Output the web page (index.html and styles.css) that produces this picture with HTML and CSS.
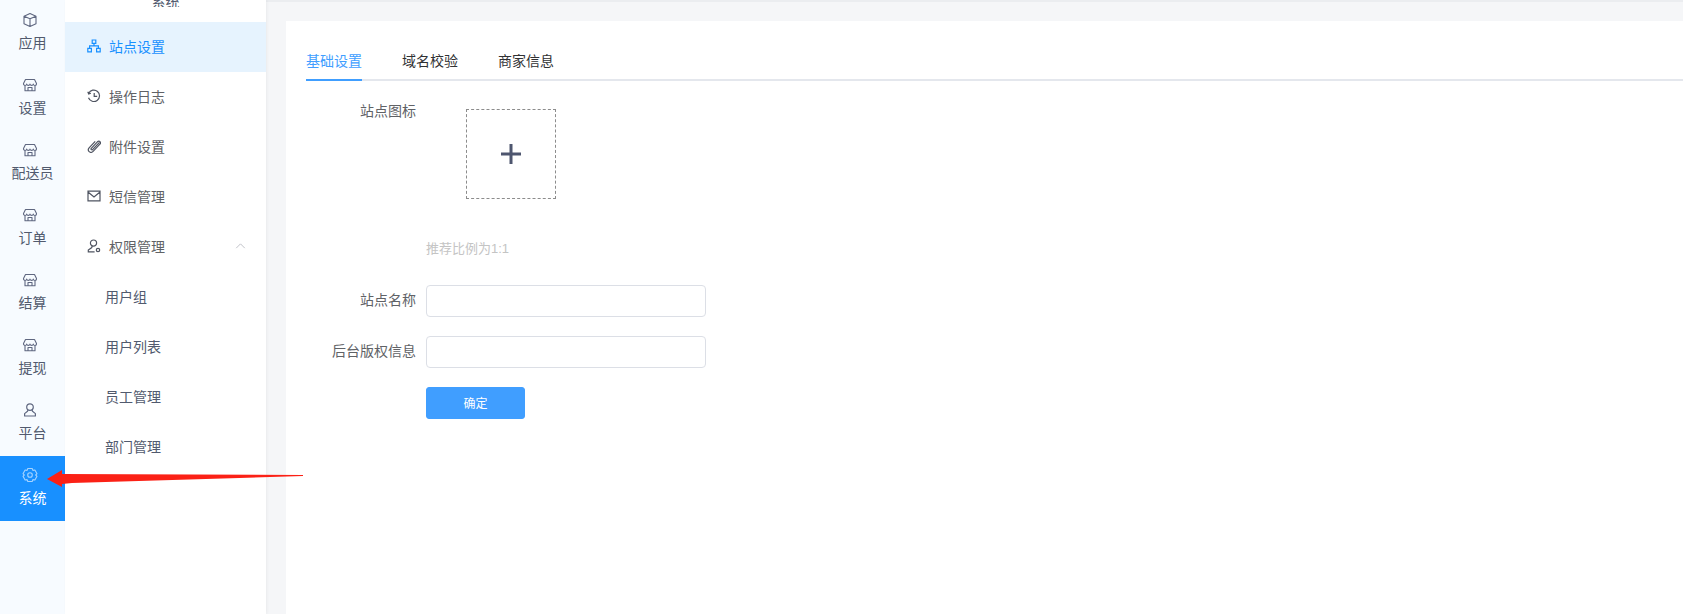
FILE: index.html
```html
<!DOCTYPE html>
<html lang="zh-CN">
<head>
<meta charset="utf-8">
<title>站点设置</title>
<link rel="stylesheet" href="styles.css">
</head>
<body>
<svg class="defs" width="0" height="0" aria-hidden="true">
  <symbol id="i-store" viewBox="0 0 16 16"><path d="M3.500 2.500h9l2 4a1.600 1.600 0 0 1-3.200.6 1.700 1.700 0 0 1-3.300 0 1.700 1.700 0 0 1-3.300 0 1.600 1.600 0 0 1-3.200-.6zM3 8.800v5h10v-5M6 13.800v-3.300h4v3.300" fill="none" stroke="currentColor" stroke-width="1.100" stroke-linejoin="round"/></symbol>
</svg>
<div class="app">
  <div class="topline"></div>
  <nav class="rail">
    <a class="rail-item"><svg class="rail-icon" viewBox="0 0 16 16"><path d="M8 1.500l6 2.700v7.500l-6 2.800-6-2.800V4.200zM2 4.200l6 2.600 6-2.600M8 6.800v7.400" fill="none" stroke="currentColor" stroke-width="1.100" stroke-linejoin="round"/></svg><span>应用</span></a>
    <a class="rail-item"><svg class="rail-icon"><use href="#i-store"/></svg><span>设置</span></a>
    <a class="rail-item"><svg class="rail-icon"><use href="#i-store"/></svg><span>配送员</span></a>
    <a class="rail-item"><svg class="rail-icon"><use href="#i-store"/></svg><span>订单</span></a>
    <a class="rail-item"><svg class="rail-icon"><use href="#i-store"/></svg><span>结算</span></a>
    <a class="rail-item"><svg class="rail-icon"><use href="#i-store"/></svg><span>提现</span></a>
    <a class="rail-item"><svg class="rail-icon" viewBox="0 0 16 16"><path d="M8 1.800a3.300 3.300 0 1 1 0 6.600 3.300 3.300 0 0 1 0-6.600zM5.800 8l-.3 1.300L2.600 11.600v2.400h10.800v-2.400l-2.900-2.300L10.200 8" fill="none" stroke="currentColor" stroke-width="1.200" stroke-linejoin="round"/></svg><span>平台</span></a>
    <a class="rail-item is-active"><svg class="rail-icon" viewBox="0 0 16 16"><path d="M5.800 1.500h4.400l.7 1.900 2-.4 2.100 3.700L13.700 8l1.300 1.300-2.100 3.700-2-.4-.7 1.900H5.800l-.7-1.900-2 .4L1 9.300 2.300 8 1 6.700 3.100 3l2 .4z" fill="none" stroke="currentColor" stroke-width="1.100" stroke-linejoin="round"/><circle cx="8" cy="8" r="2.300" fill="none" stroke="currentColor" stroke-width="1.100"/></svg><span>系统</span></a>
  </nav>
  <aside class="side">
    <div class="side-title"><span>系统</span></div>
    <a class="menu-item is-current">
      <svg class="menu-icon" viewBox="0 0 14 14"><path d="M5.200 1h3.600v3.300H5.200zM.8 9.300h3.600v3.500H.8zM9.600 9.300h3.600v3.500H9.600zM7 4.300v2.600M2.600 9.300V6.900h8.800v2.400" fill="none" stroke="currentColor" stroke-width="1.200"/></svg>
      <span>站点设置</span>
    </a>
    <a class="menu-item">
      <svg class="menu-icon" viewBox="0 0 14 14"><path d="M1.700 4.300A5.700 5.700 0 1 1 1.500 8.800M.8 2.800l.9 2.200 2.200-.7M7.200 4v3.400h3" fill="none" stroke="currentColor" stroke-width="1.200"/></svg>
      <span>操作日志</span>
    </a>
    <a class="menu-item">
      <svg class="menu-icon" viewBox="0 0 14 14"><path d="M12.500 3.300L5.600 10.600c-.9.900-2.200-.3-1.300-1.300l6.100-6.500c1.900-1.800 4.200.500 2.500 2.400l-6.800 7.200c-2.800 2.900-6.500-.9-3.800-3.800L8.200 2.300" fill="none" stroke="currentColor" stroke-width="1.200"/></svg>
      <span>附件设置</span>
    </a>
    <a class="menu-item">
      <svg class="menu-icon" viewBox="0 0 14 14"><path d="M1 2.200h12v9.600H1zM1 3l6 5 6-5" fill="none" stroke="currentColor" stroke-width="1.200"/></svg>
      <span>短信管理</span>
    </a>
    <a class="menu-item">
      <svg class="menu-icon" viewBox="0 0 14 14"><path d="M6.500 1a3.100 3.100 0 1 1 0 6.200 3.100 3.100 0 0 1 0-6.200zM5 7.200l-.2 1.400L1.300 11v1.800h6.300" fill="none" stroke="currentColor" stroke-width="1.200"/><circle cx="11" cy="11" r="1.700" fill="none" stroke="currentColor" stroke-width="1.200"/></svg>
      <span class="menu-label">权限管理</span>
      <svg class="chevron" viewBox="0 0 12 7"><path d="M1 6l5-5 5 5" fill="none" stroke="currentColor" stroke-width="1"/></svg>
    </a>
    <a class="menu-item sub">用户组</a>
    <a class="menu-item sub">用户列表</a>
    <a class="menu-item sub">员工管理</a>
    <a class="menu-item sub">部门管理</a>
  </aside>
  <main class="main">
    <section class="card">
      <div class="tabs">
        <a class="tab is-on">基础设置</a>
        <a class="tab">域名校验</a>
        <a class="tab">商家信息</a>
      </div>
      <form class="form">
        <div class="row">
          <label class="label">站点图标</label>
          <div class="control">
            <div class="upload">
              <svg class="plus" viewBox="0 0 20 20"><path d="M0 10h20M10 0v20" fill="none" stroke="currentColor" stroke-width="3"/></svg>
            </div>
            <p class="hint">推荐比例为1:1</p>
          </div>
        </div>
        <div class="row row-input">
          <label class="label">站点名称</label>
          <input class="input" type="text">
        </div>
        <div class="row row-input">
          <label class="label">后台版权信息</label>
          <input class="input" type="text">
        </div>
        <div class="row row-input">
          <span class="label"></span>
          <button class="btn" type="button">确定</button>
        </div>
      </form>
    </section>
  </main>
  <svg class="arrow" width="310" height="30" viewBox="0 0 310 30" aria-hidden="true"><polygon points="47,19 62,10 62,14 303,15 303,16 72,23 62,24 62,27" fill="#fb2116"/></svg>
</div>
</body>
</html>
```
FILE: styles.css
```css
* { box-sizing: border-box; }
html, body { margin: 0; height: 100%; }
body {
  font-family: "Liberation Sans", "Noto Sans CJK SC", sans-serif;
  font-size: 14px;
  color: #606266;
  background: #fff;
  overflow: hidden;
}
.defs { position: absolute; }
.app {
  position: relative;
  display: flex;
  width: 1683px;
  height: 614px;
  overflow: hidden;
}
.topline {
  position: absolute;
  left: 65px;
  right: 0;
  top: 0;
  height: 2px;
  background: #ebedf0;
}
.rail {
  flex: 0 0 65px;
  padding-top: 1px;
  background: #f7fbff;
}
.rail-item {
  display: flex;
  flex-direction: column;
  align-items: center;
  height: 65px;
  padding-top: 11px;
  color: #515a6e;
  line-height: 20px;
}
.rail-item span { margin-top: 5px; }
.rail-item.is-active { background: #1890ff; color: #fff; }
.rail-item.is-active .rail-icon { color: #a5d3ff; }
.rail-icon {
  display: block;
  width: 16px;
  height: 16px;
  margin-right: 5px;
  color: #5f6780;
}
.side {
  flex: 0 0 201px;
  background: #fff;
  box-shadow: 1px 0 3px rgba(0, 0, 0, .05);
  position: relative;
}
.side-title {
  position: relative;
  width: 68px;
  height: 7px;
  margin: 0 auto 15px;
  overflow: hidden;
  background: #fff;
  text-align: center;
  line-height: 4px;
  color: #515a6e;
}
.menu-item {
  display: flex;
  align-items: center;
  height: 50px;
  padding: 0 0 2px 22px;
  color: #606266;
}
.menu-item.is-current { background: #e6f3fe; color: #1890ff; }
.menu-item.sub { padding-left: 40px; color: #515a6e; }
.menu-icon { width: 14px; height: 14px; margin-right: 8px; flex: none; color: #4f5461; }
.is-current .menu-icon { color: #1890ff; }
.menu-label { flex: 1; }
.chevron { width: 11px; height: 6px; margin-right: 20px; color: #b6b9c0; }
.main {
  flex: 1;
  min-width: 0;
  padding: 21px 0 0 20px;
  background: #f5f6f8;
}
.card {
  height: 100%;
  padding: 20px 0 0 20px;
  background: #fff;
}
.tabs {
  display: flex;
  gap: 40px;
  height: 40px;
  border-bottom: 2px solid #e4e7ed;
}
.tab {
  height: 40px;
  line-height: 40px;
  color: #303133;
}
.tab.is-on {
  color: #409eff;
  border-bottom: 2px solid #409eff;
}
.form { padding-top: 20px; }
.row { display: flex; }
.row-input { margin-top: 19px; align-items: center; }
.label {
  flex: 0 0 110px;
  margin-right: 10px;
  padding-bottom: 2px;
  text-align: right;
  line-height: 20px;
  color: #606266;
}
.upload {
  display: flex;
  align-items: center;
  justify-content: center;
  width: 90px;
  height: 90px;
  margin: 8px 0 0 40px;
  border: 1px dashed #8c8c8c;
}
.plus { width: 20px; height: 20px; color: #4e566f; }
.hint {
  margin: 40px 0 26px;
  line-height: 20px;
  font-size: 13px;
  color: #c4c4c4;
}
.row:first-child + .row-input { margin-top: 0; }
.input {
  width: 280px;
  height: 32px;
  padding: 0 15px;
  border: 1px solid #dcdfe6;
  border-radius: 4px;
  background: #fff;
  outline: 0;
}
.btn {
  width: 99px;
  height: 32px;
  padding: 0 0 2px;
  border: 1px solid #409eff;
  border-radius: 3px;
  background: #409eff;
  color: #fff;
  font: 12px "Liberation Sans", "Noto Sans CJK SC", sans-serif;
}
.arrow {
  position: absolute;
  left: 0;
  top: 460px;
}
```
